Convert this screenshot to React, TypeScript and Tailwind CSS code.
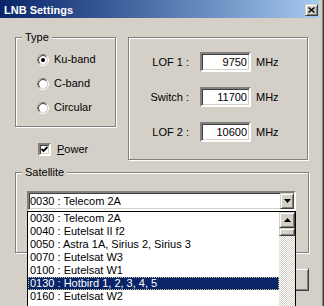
import React from 'react'

const SATS = [
  '0030 : Telecom 2A',
  '0040 : Eutelsat II f2',
  '0050 : Astra 1A, Sirius 2, Sirius 3',
  '0070 : Eutelsat W3',
  '0100 : Eutelsat W1',
  '0130 : Hotbird 1, 2, 3, 4, 5',
  '0160 : Eutelsat W2',
]

const sunken =
  'border-2 border-t-[#808080] border-l-[#808080] border-b-white border-r-white shadow-[inset_1px_1px_0_#404040,inset_-1px_-1px_0_#d4d0c8]'
const raised =
  'border border-t-[#d4d0c8] border-l-[#d4d0c8] border-b-[#404040] border-r-[#404040] shadow-[inset_1px_1px_0_#fff,inset_-1px_-1px_0_#808080] bg-[#d4d0c8]'
const etched = 'border border-[#808080] shadow-[1px_1px_0_#fff,inset_1px_1px_0_#fff]'

function Radio({ checked }: { checked?: boolean }) {
  return (
    <svg width="12" height="12" viewBox="0 0 12 12" className="shrink-0">
      <circle cx="6" cy="6" r="5.5" fill="none" stroke="#fff" />
      <path d="M2.1 9.9 A5.5 5.5 0 0 1 9.9 2.1" fill="none" stroke="#808080" />
      <circle cx="6" cy="6" r="4.5" fill="#fff" stroke="#d4d0c8" />
      <path d="M2.8 9.2 A4.5 4.5 0 0 1 9.2 2.8" fill="none" stroke="#404040" />
      {checked && <circle cx="6" cy="6" r="2" fill="#000" />}
    </svg>
  )
}

function GroupBox({ label, className, children }: { label?: string; className?: string; children?: React.ReactNode }) {
  return (
    <div className={`relative ${etched} ${className ?? ''}`}>
      {label && (
        <span className="absolute -top-[7px] left-[6px] px-[3px] bg-[#d4d0c8] leading-[13px]">{label}</span>
      )}
      {children}
    </div>
  )
}

function Field({ label, value }: { label: string; value: string }) {
  return (
    <div className="flex items-center h-[20px]">
      <span className="w-[60px] text-right">{label}</span>
      <div className={`ml-[11px] w-[51px] h-[20px] bg-white ${sunken} flex items-center justify-end pr-[2px]`}>
        {value}
      </div>
      <span className="ml-[5px]">MHz</span>
    </div>
  )
}

function Arrow({ up }: { up?: boolean }) {
  return (
    <svg width="7" height="4" viewBox="0 0 7 4">
      <path d={up ? 'M3.5 0 L7 4 L0 4 Z' : 'M0 0 L7 0 L3.5 4 Z'} fill="#000" />
    </svg>
  )
}

export default function App() {
  return (
    <div className="relative w-[324px] h-[306px] overflow-hidden bg-[#d4d0c8] text-black text-[11px] leading-[13px] font-['Liberation_Sans',Arial,sans-serif] shadow-[inset_-1px_0_0_#404040,inset_-2px_0_0_#808080]">
      {/* Title bar */}
      <div className="h-[18px] mr-[5px] flex items-start bg-linear-to-r from-[#0a246a] to-[#a6caf0]">
        <span className="pl-[4px] pt-[4px] font-bold text-white">LNB Settings</span>
        <div className={`ml-auto mr-[1px] mt-[4px] w-[13px] h-[12px] flex items-center justify-center ${raised}`}>
          <svg width="7" height="6" viewBox="0 0 7 6">
            <path d="M0.5 0.5 L6.5 5.5 M6.5 0.5 L0.5 5.5" stroke="#000" strokeWidth="1.4" />
          </svg>
        </div>
      </div>

      {/* Body */}
      <div className="pl-[15px] pt-[19px] w-[294px] box-content">
        <div className="flex">
          <div className="w-[101px]">
            <GroupBox label="Type" className="h-[90px] pt-[15px] pl-[21px] flex flex-col gap-[11px]">
              <label className="flex items-center gap-[5px] h-[13px]"><Radio checked />Ku-band</label>
              <label className="flex items-center gap-[5px] h-[13px]"><Radio />C-band</label>
              <label className="flex items-center gap-[5px] h-[13px]"><Radio />Circular</label>
            </GroupBox>
            <label className="mt-[16px] ml-[23px] flex items-center gap-[6px] h-[13px]">
              <div className={`w-[13px] h-[13px] bg-white ${sunken} flex items-center justify-center`}>
                <svg width="7" height="7" viewBox="0 0 7 7">
                  <path d="M0.5 3 L2.5 5 L6.5 1" fill="none" stroke="#000" strokeWidth="1.8" />
                </svg>
              </div>
              <span><span className="underline">P</span>ower</span>
            </label>
          </div>
          <GroupBox className="ml-[12px] w-[180px] h-[123px] pt-[14px] flex flex-col gap-[15px]">
            <Field label="LOF 1 :" value="9750" />
            <Field label="Switch :" value="11700" />
            <Field label="LOF 2 :" value="10600" />
          </GroupBox>
        </div>

        <GroupBox label="Satellite" className="mt-[12px] h-[81px] pt-[18px] pl-[11px]">
          <div className={`w-[269px] h-[20px] bg-white ${sunken} flex items-center`}>
            <span className="flex-1 pl-[1px]">0030 : Telecom 2A</span>
            <div className={`w-[14px] h-[16px] flex items-center justify-center ${raised}`}>
              <Arrow />
            </div>
          </div>
        </GroupBox>

        <div className="mt-[15px] flex justify-end gap-[6px]">
          <button className={`w-[75px] h-[23px] ${raised}`}>OK</button>
          <button className={`w-[75px] h-[23px] ${raised}`}>Cancel</button>
        </div>
      </div>

      {/* Dropped-down list */}
      <div className="absolute left-[27px] top-[211px] w-[269px] h-[110px] bg-white border border-black flex">
        <div className="flex-1 flex flex-col">
          {SATS.map((s, i) =>
            i === 5 ? (
              <div key={s} className="h-[13px] pl-[1px] bg-[#0a246a] text-white border border-dotted border-[#c8c080] leading-[11px]">
                {s}
              </div>
            ) : (
              <div key={s} className="h-[13px] pl-[2px]">{s}</div>
            )
          )}
        </div>
        <div className="w-[16px] flex flex-col">
          <div className={`h-[16px] flex items-center justify-center ${raised}`}>
            <Arrow up />
          </div>
          <div className={`h-[8px] ${raised}`} />
          <div className="flex-1 bg-[repeating-conic-gradient(#fff_0_25%,#d4d0c8_0_50%)] bg-[length:2px_2px]" />
        </div>
      </div>
    </div>
  )
}
